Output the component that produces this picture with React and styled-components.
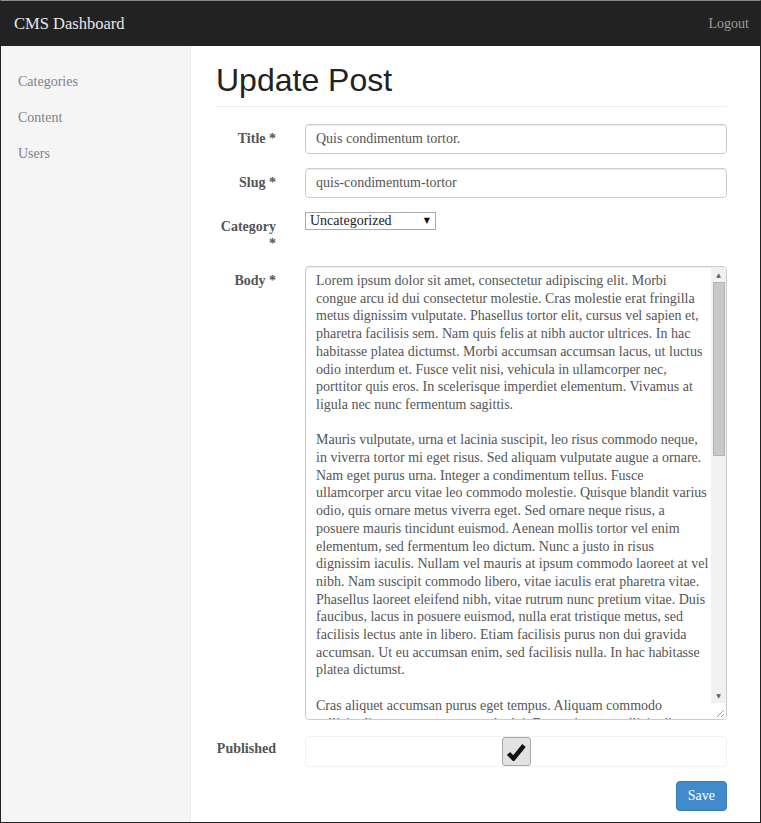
import React from 'react';
import styled, { createGlobalStyle } from 'styled-components';

const SERIF = '"Liberation Serif", "Times New Roman", serif';
const SANS = '"Liberation Sans", Arial, sans-serif';

const GlobalStyle = createGlobalStyle`
  * { box-sizing: border-box; }
  html, body { margin: 0; padding: 0; height: 100%; }
  body {
    font-family: ${SERIF};
    font-size: 14px;
    line-height: 17.86px;
    color: #555;
    background: #fff;
  }
`;

const Frame = styled.div`
  height: 100vh;
  display: flex;
  flex-direction: column;
  border: 1px solid #222;
  border-top-color: #8a8a8a;
  overflow: hidden;
`;

const Navbar = styled.div`
  height: 45px;
  flex: none;
  background: #222;
  display: flex;
  align-items: center;
  justify-content: space-between;
  padding: 0 11px 0 13px;
`;

const Brand = styled.div`
  font-size: 16.5px;
  color: #e8e8e8;
`;

const NavLink = styled.a`
  color: #9d9d9d;
  text-decoration: none;
`;

const Body = styled.div`
  flex: 1;
  display: flex;
  min-height: 0;
`;

const Sidebar = styled.nav`
  width: 190px;
  flex: none;
  background: #f5f5f5;
  border-right: 1px solid #eee;
  padding-top: 18px;
`;

const SideItem = styled.a`
  display: block;
  padding: 9px 17px;
  color: #7d8288;
  text-decoration: none;
`;

const Main = styled.main`
  flex: 1;
  padding: 0 33px 0 25px;
`;

const PageTitle = styled.h1`
  margin: 16px 0 17px;
  padding-bottom: 8px;
  border-bottom: 1px solid #eee;
  font-family: ${SANS};
  font-weight: 400;
  font-size: 32px;
  line-height: 36px;
  color: #222;
`;

const Form = styled.form`
  display: flex;
  flex-direction: column;
  gap: 14px;
`;

const Row = styled.div`
  display: grid;
  grid-template-columns: 60px 1fr;
  column-gap: 29px;
  align-items: start;
`;

const Label = styled.label`
  padding-top: 6px;
  text-align: right;
  font-weight: 700;
  line-height: 17px;
  color: #555;
`;

const Input = styled.input`
  width: 100%;
  height: 30px;
  padding: 5px 10px;
  border: 1px solid #ccc;
  border-radius: 4px;
  box-shadow: inset 0 1px 1px rgba(0, 0, 0, 0.075);
  font: inherit;
  color: #555;
  outline: none;
`;

const SelectWrap = styled.div`
  position: relative;
  width: 131px;
  height: 18px;
`;

const Select = styled.select`
  appearance: none;
  width: 100%;
  height: 100%;
  padding: 0 0 0 4px;
  border: 1px solid #a9a9a9;
  border-radius: 0;
  background: #fff;
  font: inherit;
  line-height: 16px;
  color: #222;
  outline: none;
`;

const Caret = styled.span`
  position: absolute;
  right: 6px;
  top: 1px;
  font-family: "DejaVu Sans", sans-serif;
  font-size: 8px;
  line-height: 16px;
  color: #111;
  pointer-events: none;
`;

const TextBox = styled.div`
  height: 454px;
  display: flex;
  border: 1px solid #ccc;
  border-radius: 4px;
  box-shadow: inset 0 1px 1px rgba(0, 0, 0, 0.075);
  overflow: hidden;
`;

const TextArea = styled.textarea`
  flex: 1;
  min-width: 0;
  height: 100%;
  padding: 5px 2px 5px 10px;
  border: 0;
  background: transparent;
  font: inherit;
  line-height: 17.7px;
  color: #555;
  resize: none;
  outline: none;
  overflow-y: auto;
  scrollbar-width: none;
`;

const Rail = styled.div`
  width: 15px;
  flex: none;
  display: flex;
  flex-direction: column;
  background: #f1f1f1;
`;

const RailButton = styled.div`
  height: 15px;
  flex: none;
  display: flex;
  align-items: center;
  justify-content: center;
  font-family: "DejaVu Sans", sans-serif;
  font-size: 6px;
  line-height: 1;
  color: #606060;
`;

const Track = styled.div`
  flex: 1;
  padding: 0 1px 0 2px;
`;

const Thumb = styled.div`
  height: 174px;
  background: #c8c8c8;
  border: 1px solid #b4b4b4;
`;

const Corner = styled.div`
  height: 16px;
  flex: none;
  background: #fff;
  display: flex;
  align-items: flex-end;
  justify-content: flex-end;
  padding: 0 2px 2px 0;
`;

const CheckField = styled.div`
  height: 31px;
  margin-top: 2px;
  display: flex;
  justify-content: center;
  align-items: center;
  border: 1px solid #f2f2f2;
  border-radius: 4px;
`;

const CheckBox = styled.span`
  width: 29px;
  height: 29px;
  display: flex;
  align-items: center;
  justify-content: center;
  background: #e2e2e2;
  border: 1px solid #a8a8a8;
  border-radius: 3px;
`;

const Actions = styled.div`
  display: flex;
  justify-content: flex-end;
`;

const Button = styled.button`
  height: 30px;
  padding: 0 11px;
  border: 1px solid #357ebd;
  border-radius: 4px;
  background: #428bca;
  color: #fff;
  font: inherit;
`;

const text = `Lorem ipsum dolor sit amet, consectetur adipiscing elit. Morbi congue arcu id dui consectetur molestie. Cras molestie erat fringilla metus dignissim vulputate. Phasellus tortor elit, cursus vel sapien et, pharetra facilisis sem. Nam quis felis at nibh auctor ultrices. In hac habitasse platea dictumst. Morbi accumsan accumsan lacus, ut luctus odio interdum et. Fusce velit nisi, vehicula in ullamcorper nec, porttitor quis eros. In scelerisque imperdiet elementum. Vivamus at ligula nec nunc fermentum sagittis.

Mauris vulputate, urna et lacinia suscipit, leo risus commodo neque, in viverra tortor mi eget risus. Sed aliquam vulputate augue a ornare. Nam eget purus urna. Integer a condimentum tellus. Fusce ullamcorper arcu vitae leo commodo molestie. Quisque blandit varius odio, quis ornare metus viverra eget. Sed ornare neque risus, a posuere mauris tincidunt euismod. Aenean mollis tortor vel enim elementum, sed fermentum leo dictum. Nunc a justo in risus dignissim iaculis. Nullam vel mauris at ipsum commodo laoreet at vel nibh. Nam suscipit commodo libero, vitae iaculis erat pharetra vitae. Phasellus laoreet eleifend nibh, vitae rutrum nunc pretium vitae. Duis faucibus, lacus in posuere euismod, nulla erat tristique metus, sed facilisis lectus ante in libero. Etiam facilisis purus non dui gravida accumsan. Ut eu accumsan enim, sed facilisis nulla. In hac habitasse platea dictumst.

Cras aliquet accumsan purus eget tempus. Aliquam commodo sollicitudin massa, non commodo dui. Fusce sit amet sollicitudin nibh. Curabitur vel tortor a nisl pharetra tincidunt. Donec in diam sed orci dignissim porta. Integer non lectus at magna convallis pretium. Suspendisse potenti. Vestibulum ante ipsum primis in faucibus orci luctus et ultrices posuere cubilia curae; Pellentesque habitant morbi tristique senectus et netus et malesuada fames ac turpis egestas.

Aenean ac elit a tortor tempor eleifend. Praesent pharetra, mi at sodales aliquet, nibh nisl rhoncus libero, vitae porta odio ipsum ut lorem. Nulla facilisi. Maecenas sed tellus vitae neque varius ultricies. Sed vitae eros in arcu dapibus congue. Donec eleifend, justo quis hendrerit lacinia, massa metus luctus erat, non tincidunt nunc augue nec nisl. Proin fermentum mauris nec tortor venenatis, vel accumsan libero viverra.

Nam vehicula, turpis at gravida rutrum, lectus est porta eros, sit amet scelerisque risus lorem eu velit. Curabitur semper sem a felis vulputate, a egestas mi faucibus. Phasellus sit amet imperdiet lacus. Etiam in sem sit amet nulla luctus pulvinar.`;

const Check = () => (
  <svg width="20" height="18" viewBox="0 0 20 18">
    <path d="M2.5 10.5 L7.5 15.5 L18 2.5" fill="none" stroke="#111" strokeWidth="4.4" strokeLinejoin="miter" />
  </svg>
);

const Grip = () => (
  <svg width="8" height="8" viewBox="0 0 8 8">
    <path d="M8 1 L1 8 M8 5 L5 8" stroke="#999" strokeWidth="1" />
  </svg>
);

const App = () => (
  <>
    <GlobalStyle />
    <Frame>
      <Navbar>
        <Brand>CMS Dashboard</Brand>
        <NavLink href="#">Logout</NavLink>
      </Navbar>
      <Body>
        <Sidebar>
          <SideItem href="#">Categories</SideItem>
          <SideItem href="#">Content</SideItem>
          <SideItem href="#">Users</SideItem>
        </Sidebar>
        <Main>
          <PageTitle>Update Post</PageTitle>
          <Form onSubmit={(e) => e.preventDefault()}>
            <Row>
              <Label>Title *</Label>
              <Input defaultValue="Quis condimentum tortor." />
            </Row>
            <Row>
              <Label>Slug *</Label>
              <Input defaultValue="quis-condimentum-tortor" />
            </Row>
            <Row>
              <Label>Category *</Label>
              <SelectWrap>
                <Select defaultValue="uncategorized">
                  <option value="uncategorized">Uncategorized</option>
                </Select>
                <Caret>▼</Caret>
              </SelectWrap>
            </Row>
            <Row>
              <Label>Body *</Label>
              <TextBox>
                <TextArea defaultValue={text} />
                <Rail>
                  <RailButton>▲</RailButton>
                  <Track><Thumb /></Track>
                  <RailButton>▼</RailButton>
                  <Corner><Grip /></Corner>
                </Rail>
              </TextBox>
            </Row>
            <Row>
              <Label>Published</Label>
              <CheckField>
                <CheckBox><Check /></CheckBox>
              </CheckField>
            </Row>
            <Actions>
              <Button type="submit">Save</Button>
            </Actions>
          </Form>
        </Main>
      </Body>
    </Frame>
  </>
);

export default App;
